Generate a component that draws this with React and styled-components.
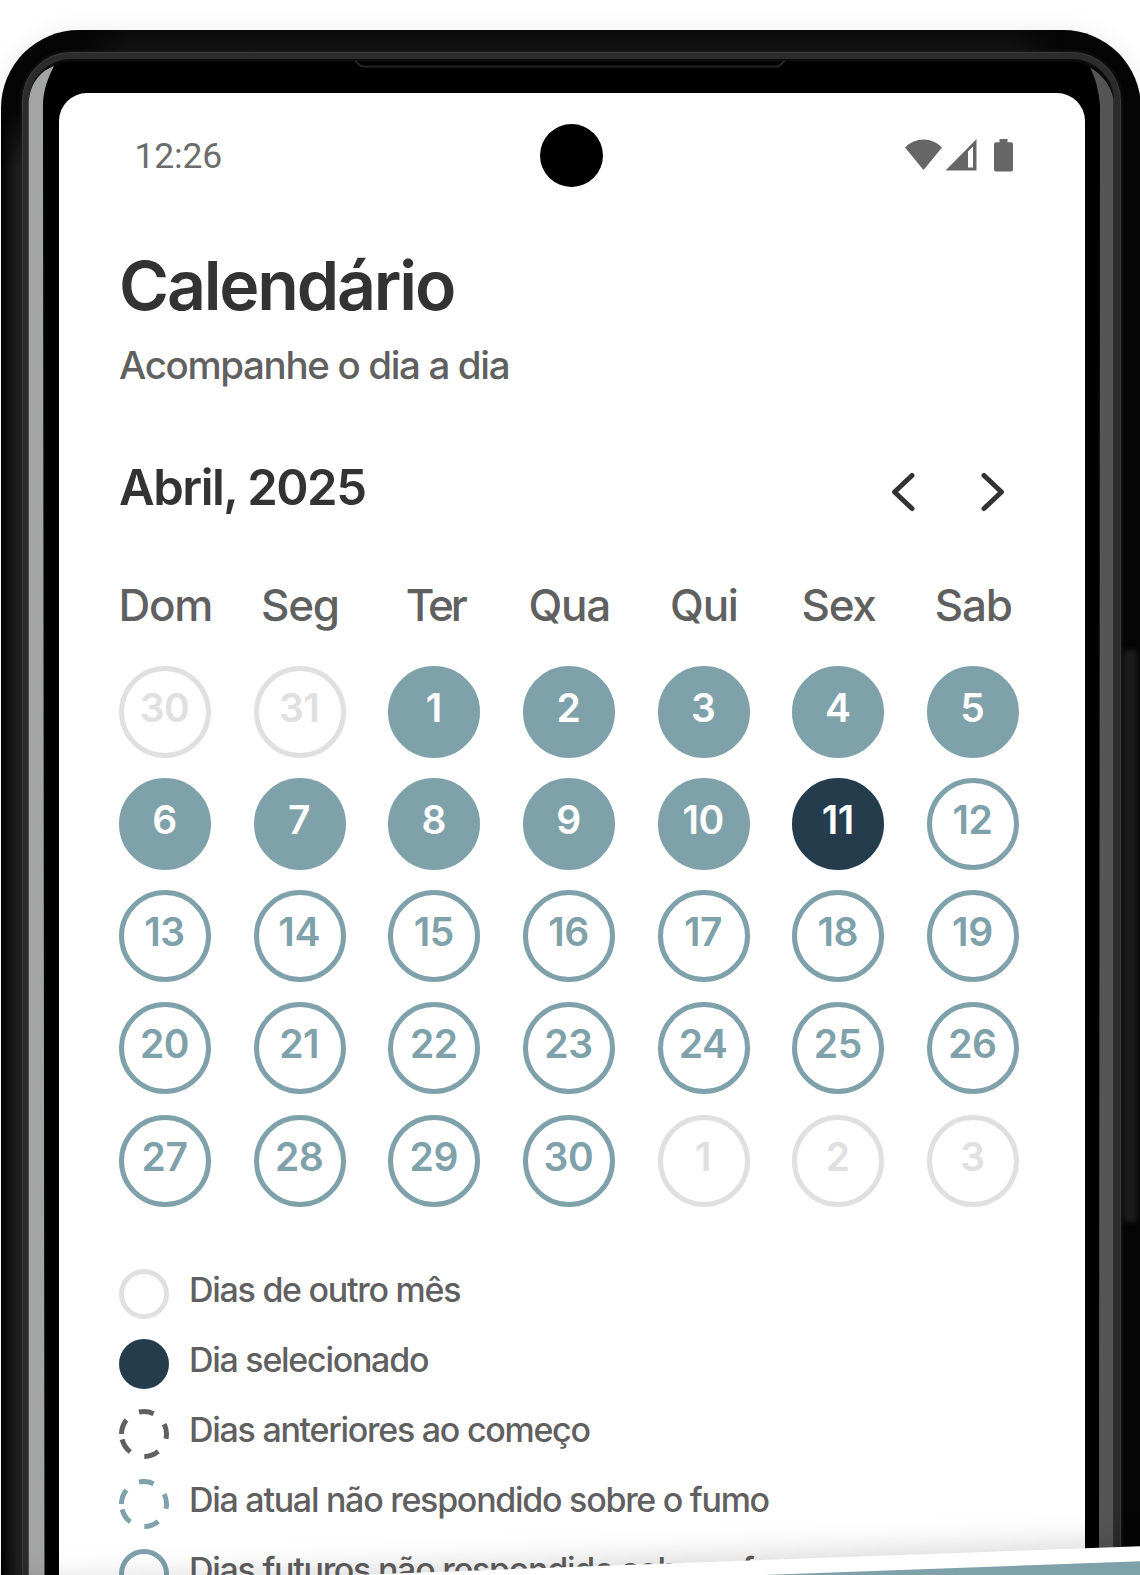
import React from "react";
import styled, { createGlobalStyle } from "styled-components";

const teal = "#7fa1aa";
const navy = "#253c4c";
const ink = "#333333";
const gray = "#606060";
const pale = "#e0e0e0";

const GlobalStyle = createGlobalStyle`
  * { box-sizing: border-box; }
  html, body { margin: 0; padding: 0; background: #fff; }
`;

const Page = styled.main`
  position: relative;
  width: 1140px;
  height: 1575px;
  overflow: hidden;
  padding: 30px 0 0 1px;
  background: #fff;
  font-family: Inter, "Liberation Sans", sans-serif;
`;

const Phone = styled.section`
  position: relative;
  width: 1140px;
  height: 2300px;
  padding: 22px 20px 0 21px;
  border-radius: 78px;
  background: #050505;
  box-shadow: 0 0 26px rgba(0, 0, 0, 0.07);
`;

const TopSheen = styled.div`
  position: absolute;
  inset: 0 78px auto 78px;
  height: 24px;
  background: linear-gradient(180deg, #0b0b0b, #141414);
  mask-image: linear-gradient(90deg, transparent, #000 50px, #000 calc(100% - 50px), transparent);
`;

const LeftSheen = styled.div`
  position: absolute;
  inset: 78px auto 0 0;
  width: 24px;
  background: linear-gradient(90deg, #030303, #1d1d1d 15px, #242424);
  mask-image: linear-gradient(180deg, transparent, #000 60px);
`;

const SideButton = styled.div`
  position: absolute;
  top: 620px;
  right: 4px;
  width: 14px;
  height: 572px;
  border-radius: 4px;
  background: #1c1c1c;
  filter: blur(2.5px);
`;

const Rim = styled.div`
  position: relative;
  height: 100%;
  padding: 6px 6px 0;
  border-radius: 49px;
  border: 1px solid #3b3b3b;
  background: #2c2c2c;
  box-shadow: 0 0 4px #222;
`;

const Bezel = styled.div`
  position: relative;
  height: 100%;
  padding: 34px 29px 0 30px;
  border-radius: 42px;
  background: #000;
  box-shadow: inset 0 0 4px 1px #1c1c1c;
`;

const Glints = styled.svg`
  position: absolute;
  left: 0;
  top: 0;
  width: 1140px;
  height: 1575px;
  pointer-events: none;
`;

const Screen = styled.div`
  height: 100%;
  border-radius: 28px 28px 0 0;
  background: #fff;
`;

const StatusBar = styled.div`
  display: grid;
  grid-template-columns: 1fr 63px 1fr;
  align-items: center;
  height: 125px;
  padding: 0 71px 0 75.5px;
`;

const Clock = styled.time`
  font: 400 35.5px/44px Roboto, sans-serif;
  letter-spacing: -0.2px;
  color: #6c6c6c;
`;

const Camera = styled.div`
  width: 63px;
  height: 63px;
  margin-left: -3px;
  border-radius: 50%;
  background: #000;
`;

const StatusIcons = styled.svg`
  justify-self: end;
  width: 109px;
  height: 33px;
  fill: #666;
`;

const Content = styled.div`
  padding: 27px 66px 0 60px;
`;

const Title = styled.h1`
  margin: 0;
  font-size: 68px;
  line-height: 80px;
  font-weight: 570;
  letter-spacing: -2.2px;
  color: ${ink};
`;

const Subtitle = styled.p`
  margin: 14.5px 0 0;
  font-size: 38.5px;
  line-height: 50px;
  font-weight: 450;
  letter-spacing: -1.35px;
  color: ${gray};
`;

const MonthBar = styled.div`
  display: flex;
  align-items: center;
  justify-content: space-between;
  height: 60px;
  margin-top: 72.5px;
`;

const MonthName = styled.h2`
  margin: 0;
  padding-bottom: 10px;
  font-size: 49px;
  line-height: 49px;
  font-weight: 570;
  letter-spacing: -1.5px;
  color: ${ink};
`;

const Pager = styled.div`
  display: flex;
  gap: 30px;
`;

const PagerButton = styled.button`
  display: grid;
  place-items: center;
  width: 60px;
  height: 60px;
  padding: 0;
  border: 0;
  background: none;
  color: ${ink};
`;

const Weekdays = styled.div`
  display: grid;
  grid-template-columns: repeat(7, 92px);
  justify-content: space-between;
  margin-top: 52.5px;
`;

const Weekday = styled.span`
  display: flex;
  justify-content: center;
  padding-left: ${(p) => (p.$tight ? 2 : 0.5)}px;
  font-size: 44px;
  line-height: 60px;
  font-weight: 450;
  letter-spacing: ${(p) => (p.$tight ? -3 : -1.25)}px;
  white-space: nowrap;
  color: ${gray};
`;

const Days = styled.div`
  display: grid;
  grid-template-columns: repeat(7, 92px);
  grid-auto-rows: 92px;
  justify-content: space-between;
  row-gap: 20.3px;
  margin-top: 31px;
`;

const tones = {
  other: { line: pale, fill: "transparent", text: pale },
  done: { line: teal, fill: teal, text: "#fff" },
  selected: { line: navy, fill: navy, text: "#fff" },
  future: { line: teal, fill: "transparent", text: teal },
};

const Day = styled.button`
  display: flex;
  align-items: center;
  justify-content: center;
  padding: 0 1px 8px 0;
  border: 5px solid ${(p) => tones[p.$tone].line};
  border-radius: 50%;
  background: ${(p) => tones[p.$tone].fill};
  color: ${(p) => tones[p.$tone].text};
  font: 580 39px/44px Inter, "Liberation Sans", sans-serif;
  letter-spacing: -0.4px;
`;

const Legend = styled.ul`
  display: flex;
  flex-direction: column;
  gap: 20px;
  margin: 62.5px 0 0;
  padding: 0;
  list-style: none;
`;

const LegendRow = styled.li`
  display: flex;
  align-items: center;
  gap: 20px;
  height: 50px;
`;

const Swatch = styled.svg`
  flex: none;
  width: 50px;
  height: 50px;
  fill: none;
`;

const LegendText = styled.span`
  padding-bottom: 8px;
  font-size: 34px;
  line-height: 42px;
  font-weight: 450;
  letter-spacing: -1.28px;
  white-space: nowrap;
  color: ${gray};
`;

const Ribbon = styled.div`
  position: absolute;
  left: -60px;
  top: 1544.3px;
  width: 1260px;
  height: 140px;
  padding-top: 14.5px;
  background: #fff;
  transform: rotate(-2.1deg);
  transform-origin: 1260px 0;
  box-shadow: 0 -4px 32px rgba(0, 0, 0, 0.17);
`;

const RibbonFill = styled.div`
  height: 100%;
  background: ${teal};
`;

const weekdays = ["Dom", "Seg", "Ter", "Qua", "Qui", "Sex", "Sab"];

const days = [
  ...[30, 31].map((n) => [n, "other"]),
  ...Array.from({ length: 10 }, (_, i) => [i + 1, "done"]),
  [11, "selected"],
  ...Array.from({ length: 19 }, (_, i) => [i + 12, "future"]),
  ...[1, 2, 3].map((n) => [n, "other"]),
];

const legend = [
  { text: "Dias de outro mês", color: pale },
  { text: "Dia selecionado", color: navy, solid: true },
  { text: "Dias anteriores ao começo", color: gray, dashed: true },
  { text: "Dia atual não respondido sobre o fumo", color: teal, dashed: true },
  { text: "Dias futuros não respondido sobre o fumo", color: teal },
];

function Chevron({ d }) {
  return (
    <svg width="60" height="60" viewBox="0 0 60 60" fill="none" stroke="currentColor"
      strokeWidth="5" strokeLinecap="round" strokeLinejoin="round">
      <path d={d} />
    </svg>
  );
}

export default function App() {
  return (
    <>
      <GlobalStyle />
      <Page>
        <Phone>
          <TopSheen />
          <LeftSheen />
          <SideButton />
          <Rim>
            <Bezel>
              <Screen>
                <StatusBar>
                  <Clock>12:26</Clock>
                  <Camera />
                  <StatusIcons viewBox="0 0 109 33">
                    <path d="M0 8.5C10-2.2 27-2.2 37 8.5L18.5 31Z" />
                    <path fillRule="evenodd" d="M40.500 31.500 71.500 0V31.500ZM63 12.500V28.500H68V7.500Z" />
                    <path d="M94.500 0h8v3.200h3.500a2 2 0 0 1 2 2V30.500a2 2 0 0 1-2 2H91a2 2 0 0 1-2-2V5.200a2 2 0 0 1 2-2h3.500Z" />
                  </StatusIcons>
                </StatusBar>
                <Content>
                  <Title>Calendário</Title>
                  <Subtitle>Acompanhe o dia a dia</Subtitle>
                  <MonthBar>
                    <MonthName>Abril, 2025</MonthName>
                    <Pager>
                      <PagerButton aria-label="Mês anterior">
                        <Chevron d="M43 13.500 25.500 30 43 46.500" />
                      </PagerButton>
                      <PagerButton aria-label="Próximo mês">
                        <Chevron d="M25 13.500 42.500 30 25 46.500" />
                      </PagerButton>
                    </Pager>
                  </MonthBar>
                  <Weekdays>
                    {weekdays.map((d) => (
                      <Weekday key={d} $tight={d === "Ter"}>{d}</Weekday>
                    ))}
                  </Weekdays>
                  <Days>
                    {days.map(([n, tone], i) => (
                      <Day key={i} $tone={tone}>{n}</Day>
                    ))}
                  </Days>
                  <Legend>
                    {legend.map((item) => (
                      <LegendRow key={item.text}>
                        <Swatch viewBox="0 0 50 50">
                          <circle
                            cx="25" cy="25" r="22.500"
                            stroke={item.color}
                            strokeWidth="5"
                            fill={item.solid ? item.color : "none"}
                            strokeDasharray={item.dashed ? "15 15" : undefined}
                            transform="rotate(180 25 25)"
                          />
                        </Swatch>
                        <LegendText>{item.text}</LegendText>
                      </LegendRow>
                    ))}
                  </Legend>
                </Content>
              </Screen>
            </Bezel>
          </Rim>
        </Phone>
        <Glints viewBox="0 0 1140 1575">
          <path d="M54 66C40 71 31 83 29 99V1575H44.500L43 106C43 90 48 78 54 66Z" fill="#a3a5a4" />
          <path d="M28.500 100V1575" stroke="#4a4a4a" />
          <path d="M1090 67.500C1102 74 1111 86 1113.500 99V1575H1099L1100 106C1099 92 1096 79 1090 67.500Z" fill="#555" />
          <path d="M355 61C359 63 359 66.500 363 66.500H777C781 66.500 781 63 785 61" fill="none" stroke="#232323" strokeWidth="2" />
        </Glints>
        <Ribbon>
          <RibbonFill />
        </Ribbon>
      </Page>
    </>
  );
}
